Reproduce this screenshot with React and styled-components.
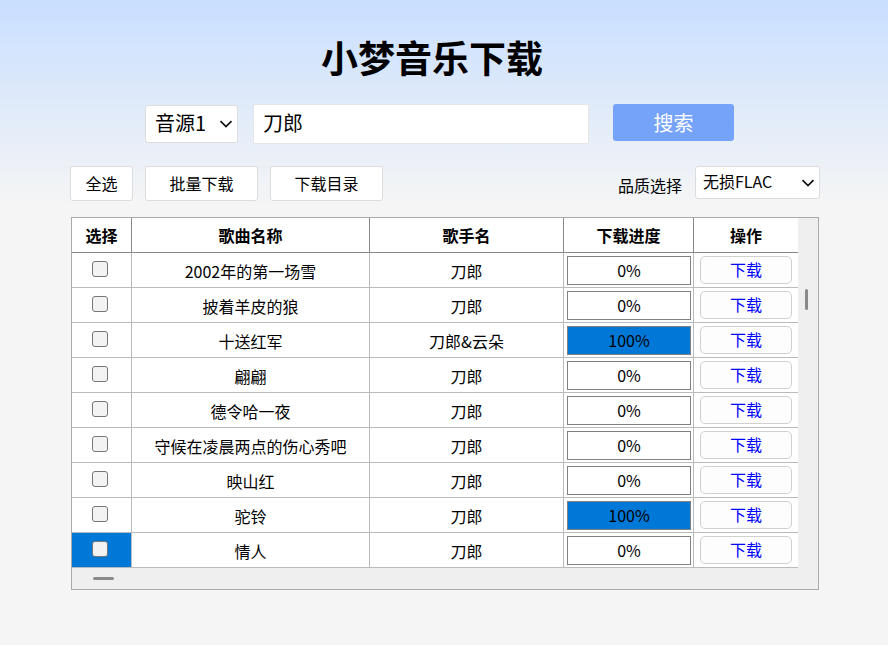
import styled, { createGlobalStyle } from "styled-components";

const songs = [
  { name: "2002年的第一场雪", singer: "刀郎", progress: 0 },
  { name: "披着羊皮的狼", singer: "刀郎", progress: 0 },
  { name: "十送红军", singer: "刀郎&云朵", progress: 100 },
  { name: "翩翩", singer: "刀郎", progress: 0 },
  { name: "德令哈一夜", singer: "刀郎", progress: 0 },
  { name: "守候在凌晨两点的伤心秀吧", singer: "刀郎", progress: 0 },
  { name: "映山红", singer: "刀郎", progress: 0 },
  { name: "驼铃", singer: "刀郎", progress: 100 },
  { name: "情人", singer: "刀郎", progress: 0, active: true },
];

const chevron =
  "url(\"data:image/svg+xml,%3Csvg xmlns='http://www.w3.org/2000/svg' width='14' height='8' viewBox='0 0 14 8'%3E%3Cpath d='M1.5 1.2 7 6.6l5.5-5.4' fill='none' stroke='%23111' stroke-width='1.7'/%3E%3C/svg%3E\")";

const fontStack = `"Noto Sans CJK SC", "Liberation Sans", sans-serif`;

const GlobalStyle = createGlobalStyle`
  html, body {
    margin: 0;
    padding: 0;
    height: 100%;
  }
  body {
    background: linear-gradient(to bottom, #c9dfff 0, #f5f5f5 205px) no-repeat #f5f5f5;
    font-family: ${fontStack};
    color: #000;
  }
`;

const Page = styled.div`
  width: 888px;
  height: 645px;
  box-sizing: border-box;
  padding: 30px 68px 0 70px;
  overflow: hidden;
`;

const Title = styled.h1`
  margin: 0 26px 20px 0;
  font-size: 37px;
  line-height: 54px;
  font-weight: 700;
  text-align: center;
`;

const SearchRow = styled.div`
  display: flex;
  align-items: flex-start;
  margin-left: 75px;
  height: 62px;
`;

const SourceSelect = styled.select`
  appearance: none;
  width: 93px;
  height: 38px;
  margin: 1px 15px 0 0;
  padding: 0 0 3px 9px;
  font: 20px ${fontStack};
  background: #fff ${chevron} no-repeat right 4px center;
  border: 1px solid #ddd;
  border-radius: 3px;
  color: #000;
`;

const SearchInput = styled.input`
  width: 336px;
  height: 40px;
  box-sizing: border-box;
  margin-right: 24px;
  padding: 0 9px 4px;
  font: 20px ${fontStack};
  background: #fff;
  border: 1px solid #e6e6e6;
  border-radius: 2px;
  color: #000;
  outline: none;
`;

const SearchButton = styled.button`
  width: 121px;
  height: 37px;
  padding: 0;
  font: 20px ${fontStack};
  color: #fff;
  background: #76a3fa;
  border: none;
  border-radius: 3px;
`;

const Toolbar = styled.div`
  display: flex;
  align-items: flex-start;
  gap: 12px;
  height: 51px;
`;

const ToolButton = styled.button`
  width: ${(p) => p.$width}px;
  height: 35px;
  padding: 0 0 2px;
  font: 16px ${fontStack};
  color: #000;
  background: #fff;
  border: 1px solid #ddd;
  border-radius: 3px;
`;

const Quality = styled.label`
  margin-left: auto;
  display: flex;
  align-items: center;
  gap: 13px;
  font-size: 16px;
  height: 33px;
`;

const QualityText = styled.span`
  padding-top: 4px;
`;

const QualitySelect = styled.select`
  appearance: none;
  width: 125px;
  height: 33px;
  padding: 0 0 3px 7px;
  font: 16px ${fontStack};
  background: #fff ${chevron} no-repeat right 4px center;
  border: 1px solid #ddd;
  border-radius: 3px;
  color: #000;
`;

const Frame = styled.div`
  margin-left: 1px;
  width: 748px;
  height: 373px;
  box-sizing: border-box;
  border: 1px solid #aaa;
  display: grid;
  grid-template-columns: 726px 20px;
  grid-template-rows: 350px 21px;
  background: #efefef;
`;

const Table = styled.table`
  width: 726px;
  border-collapse: separate;
  border-spacing: 0;
  table-layout: fixed;
  background: #fff;
  font-size: 16px;
  align-self: start;
`;

const Th = styled.th`
  height: 34px;
  padding: 0;
  font-weight: 700;
  line-height: 34px;
  box-sizing: content-box;
  border-bottom: 1px solid #888;
  border-right: 1px solid #888;
  &:last-child {
    border-right: none;
  }
`;

const Td = styled.td`
  height: 34px;
  padding: 0;
  text-align: center;
  vertical-align: top;
  line-height: 34px;
  box-sizing: content-box;
  border-bottom: 1px solid #bbb;
  border-right: 1px solid #bbb;
  &:last-child {
    border-right: none;
  }
`;

const TextCell = styled(Td)`
  height: 32px;
  line-height: 32px;
  padding-top: 2px;
`;

const CheckCell = styled(Td)`
  background: ${(p) => (p.$active ? "#0078d7" : "#fff")};
`;

const Check = styled.input.attrs({ type: "checkbox" })`
  appearance: none;
  display: block;
  box-sizing: border-box;
  width: 16px;
  height: 16px;
  margin: 8px 0 0 20px;
  background: #f3f3f3;
  border: 1px solid #767676;
  border-radius: 3px;
`;

const Progress = styled.div`
  box-sizing: border-box;
  width: 124px;
  height: 29px;
  margin: 3px 0 0 3px;
  border: 1px solid #808080;
  background: ${(p) => (p.$done ? "#0078d7" : "#fff")};
  line-height: 27px;
`;

const DownloadButton = styled.button`
  display: block;
  box-sizing: border-box;
  width: 92px;
  height: 28px;
  margin: 3px 0 0 6px;
  padding: 0 0 2px;
  font: 16px ${fontStack};
  color: #0000ff;
  background: #fdfdfd;
  border: 1px solid #d0d0d0;
  border-radius: 5px;
`;

const VTrack = styled.div`
  display: flex;
  justify-content: center;
  padding: 71px 3px 0 0;
  box-sizing: border-box;
`;

const VThumb = styled.div`
  width: 3px;
  height: 21px;
  border-radius: 2px;
  background: #8a8a8a;
`;

const HTrack = styled.div`
  grid-column: 1 / 3;
  padding: 9px 0 0 21px;
  box-sizing: border-box;
`;

const HThumb = styled.div`
  width: 21px;
  height: 3px;
  border-radius: 2px;
  background: #8a8a8a;
`;

export default function App() {
  return (
    <>
      <GlobalStyle />
      <Page>
        <Title>小梦音乐下载</Title>
        <SearchRow>
          <SourceSelect defaultValue="1">
            <option value="1">音源1</option>
            <option value="2">音源2</option>
          </SourceSelect>
          <SearchInput defaultValue="刀郎" />
          <SearchButton>搜索</SearchButton>
        </SearchRow>
        <Toolbar>
          <ToolButton $width={63}>全选</ToolButton>
          <ToolButton $width={113}>批量下载</ToolButton>
          <ToolButton $width={113}>下载目录</ToolButton>
          <Quality>
            <QualityText>品质选择</QualityText>
            <QualitySelect defaultValue="flac">
              <option value="flac">无损FLAC</option>
              <option value="mp3">高品MP3</option>
            </QualitySelect>
          </Quality>
        </Toolbar>
        <Frame>
          <Table>
            <colgroup>
              <col style={{ width: 60 }} />
              <col style={{ width: 238 }} />
              <col style={{ width: 194 }} />
              <col style={{ width: 130 }} />
              <col style={{ width: 104 }} />
            </colgroup>
            <thead>
              <tr>
                <Th>选择</Th>
                <Th>歌曲名称</Th>
                <Th>歌手名</Th>
                <Th>下载进度</Th>
                <Th>操作</Th>
              </tr>
            </thead>
            <tbody>
              {songs.map((song) => (
                <tr key={song.name}>
                  <CheckCell $active={song.active}>
                    <Check />
                  </CheckCell>
                  <TextCell>{song.name}</TextCell>
                  <TextCell>{song.singer}</TextCell>
                  <Td>
                    <Progress $done={song.progress === 100}>{song.progress}%</Progress>
                  </Td>
                  <Td>
                    <DownloadButton>下载</DownloadButton>
                  </Td>
                </tr>
              ))}
            </tbody>
          </Table>
          <VTrack>
            <VThumb />
          </VTrack>
          <HTrack>
            <HThumb />
          </HTrack>
        </Frame>
      </Page>
    </>
  );
}
